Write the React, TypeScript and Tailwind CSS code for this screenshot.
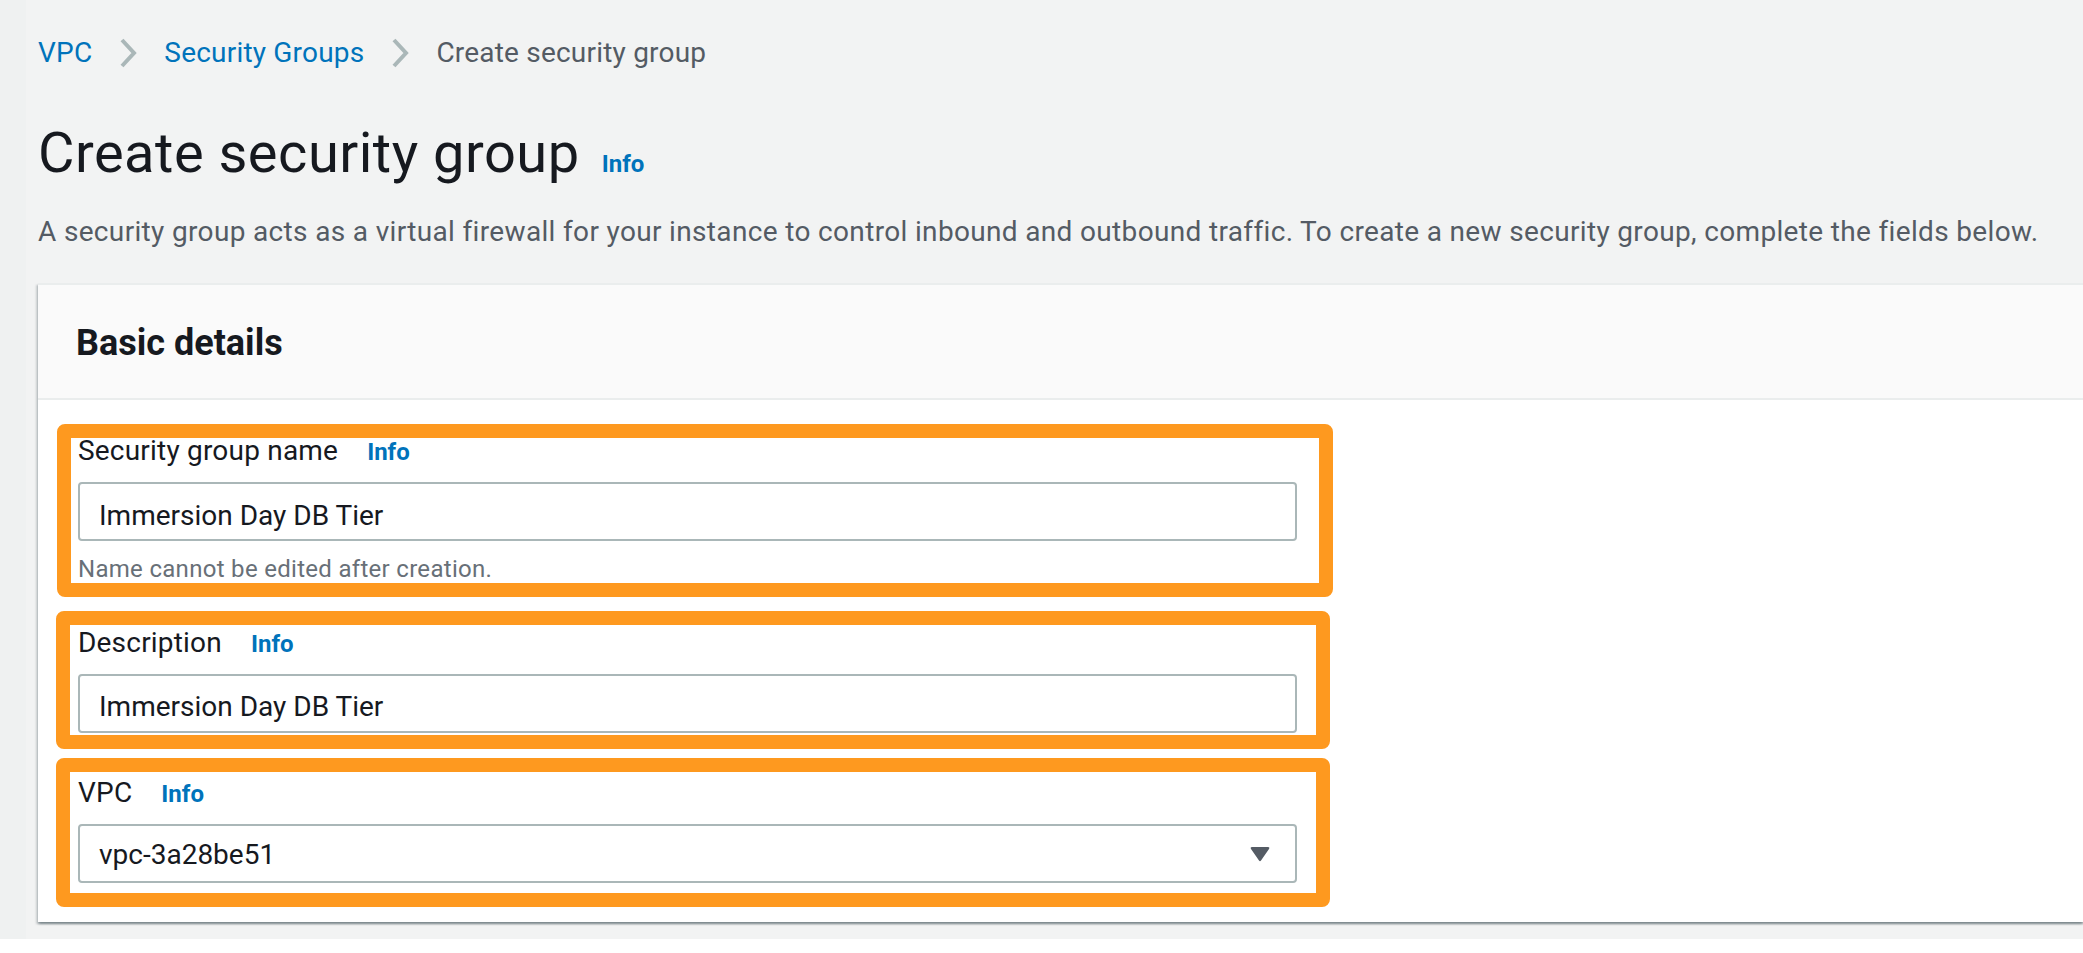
import React from "react";

function Chevron() {
  return (
    <svg width="18" height="30" viewBox="0 0 18 30" className="mx-[27px] shrink-0">
      <polyline points="3,2 15,15 3,28" fill="none" stroke="#aab7b8" strokeWidth="4" />
    </svg>
  );
}

function Info() {
  return <span className="ml-[29px] text-[24px] font-bold leading-[32px] text-[#0073bb]">Info</span>;
}

function Label({ text }: { text: string }) {
  return (
    <div className="flex items-baseline">
      <span className="text-[28px] leading-[40px] tracking-[0.2px] text-[#16191f]">{text}</span>
      <Info />
    </div>
  );
}

function Highlight({ cls }: { cls: string }) {
  return <div className={"pointer-events-none absolute rounded-[8px] border-[14px] border-[#fe991f] " + cls} />;
}

export default function App() {
  return (
    <div className="h-[953px] w-full overflow-hidden bg-white font-['Roboto',sans-serif]">
      <div className="flex h-[939px] bg-[#f2f3f3]">
        <div className="w-[26px] shrink-0 bg-[#eff1f1]" />
        <div className="min-w-0 flex-1 pl-[12px]">
          {/* Breadcrumb */}
          <nav className="mt-[33px] flex h-[40px] items-center text-[28px] leading-[40px] tracking-[0.2px]">
            <span className="text-[#0073bb]">VPC</span>
            <Chevron />
            <span className="text-[#0073bb]">Security Groups</span>
            <Chevron />
            <span className="text-[#545b64]">Create security group</span>
          </nav>

          {/* Heading */}
          <div className="mt-[48px] flex items-baseline">
            <h1 className="text-[56px] font-normal leading-[64px] tracking-[0.5px] text-[#16191f]">Create security group</h1>
            <span className="ml-[22px] text-[24px] font-bold leading-[32px] text-[#0073bb]">Info</span>
          </div>

          <p className="mt-[27px] whitespace-nowrap text-[28px] leading-[40px] tracking-[0.34px] text-[#545b64]">
            A security group acts as a virtual firewall for your instance to control inbound and outbound traffic. To create a new security group, complete the fields below.
          </p>

          {/* Card */}
          <div className="mt-[31px] bg-white shadow-[0_2px_2px_0_rgba(0,28,36,0.3),2px_2px_2px_0_rgba(0,28,36,0.15),-2px_2px_2px_0_rgba(0,28,36,0.15)]">
            <div className="border-t-2 border-b-2 border-[#eaeded] bg-[#fafafa] pl-[38px] pt-[34px] pb-[31px]">
              <h2 className="text-[36px] font-bold leading-[48px] text-[#16191f]">Basic details</h2>
            </div>
            <div className="pl-[40px] pt-[31px] pb-[39px]">
              {/* Field 1 */}
              <div className="relative w-[1219px]">
                <Label text="Security group name" />
                <div className="mt-[11px] flex h-[59px] items-center rounded-[4px] border-2 border-[#aab7b8] bg-white pl-[19px] pt-[9px] text-[28px] leading-[40px] text-[#16191f]">
                  Immersion Day DB Tier
                </div>
                <div className="mt-[12px] text-[24px] leading-[32px] tracking-[0.3px] text-[#687078]">Name cannot be edited after creation.</div>
                <Highlight cls="-top-[7px] -bottom-[12px] -left-[21px] -right-[36px]" />
              </div>

              {/* Field 2 */}
              <div className="relative mt-[38px] w-[1219px]">
                <Label text="Description" />
                <div className="mt-[11px] flex h-[59px] items-center rounded-[4px] border-2 border-[#aab7b8] bg-white pl-[19px] pt-[6px] text-[28px] leading-[40px] text-[#16191f]">
                  Immersion Day DB Tier
                </div>
                <Highlight cls="-top-[12px] -bottom-[16px] -left-[22px] -right-[33px]" />
              </div>

              {/* Field 3 */}
              <div className="relative mt-[40px] w-[1219px]">
                <Label text="VPC" />
                <div className="mt-[11px] flex h-[59px] items-center justify-between rounded-[4px] border-2 border-[#aab7b8] bg-white pl-[19px] pr-[25px] pt-[2px] text-[28px] leading-[40px] text-[#16191f]">
                  <span>vpc-3a28be51</span>
                  <svg width="20" height="16" viewBox="0 0 20 16" className="-mt-[2px]">
                    <path d="M2 1 H18 Q20 1 19 3 L11 14.5 Q10 16 9 14.5 L1 3 Q0 1 2 1 Z" fill="#545b64" />
                  </svg>
                </div>
                <Highlight cls="-top-[15px] -bottom-[24px] -left-[22px] -right-[33px]" />
              </div>
            </div>
          </div>
        </div>
      </div>
    </div>
  );
}
